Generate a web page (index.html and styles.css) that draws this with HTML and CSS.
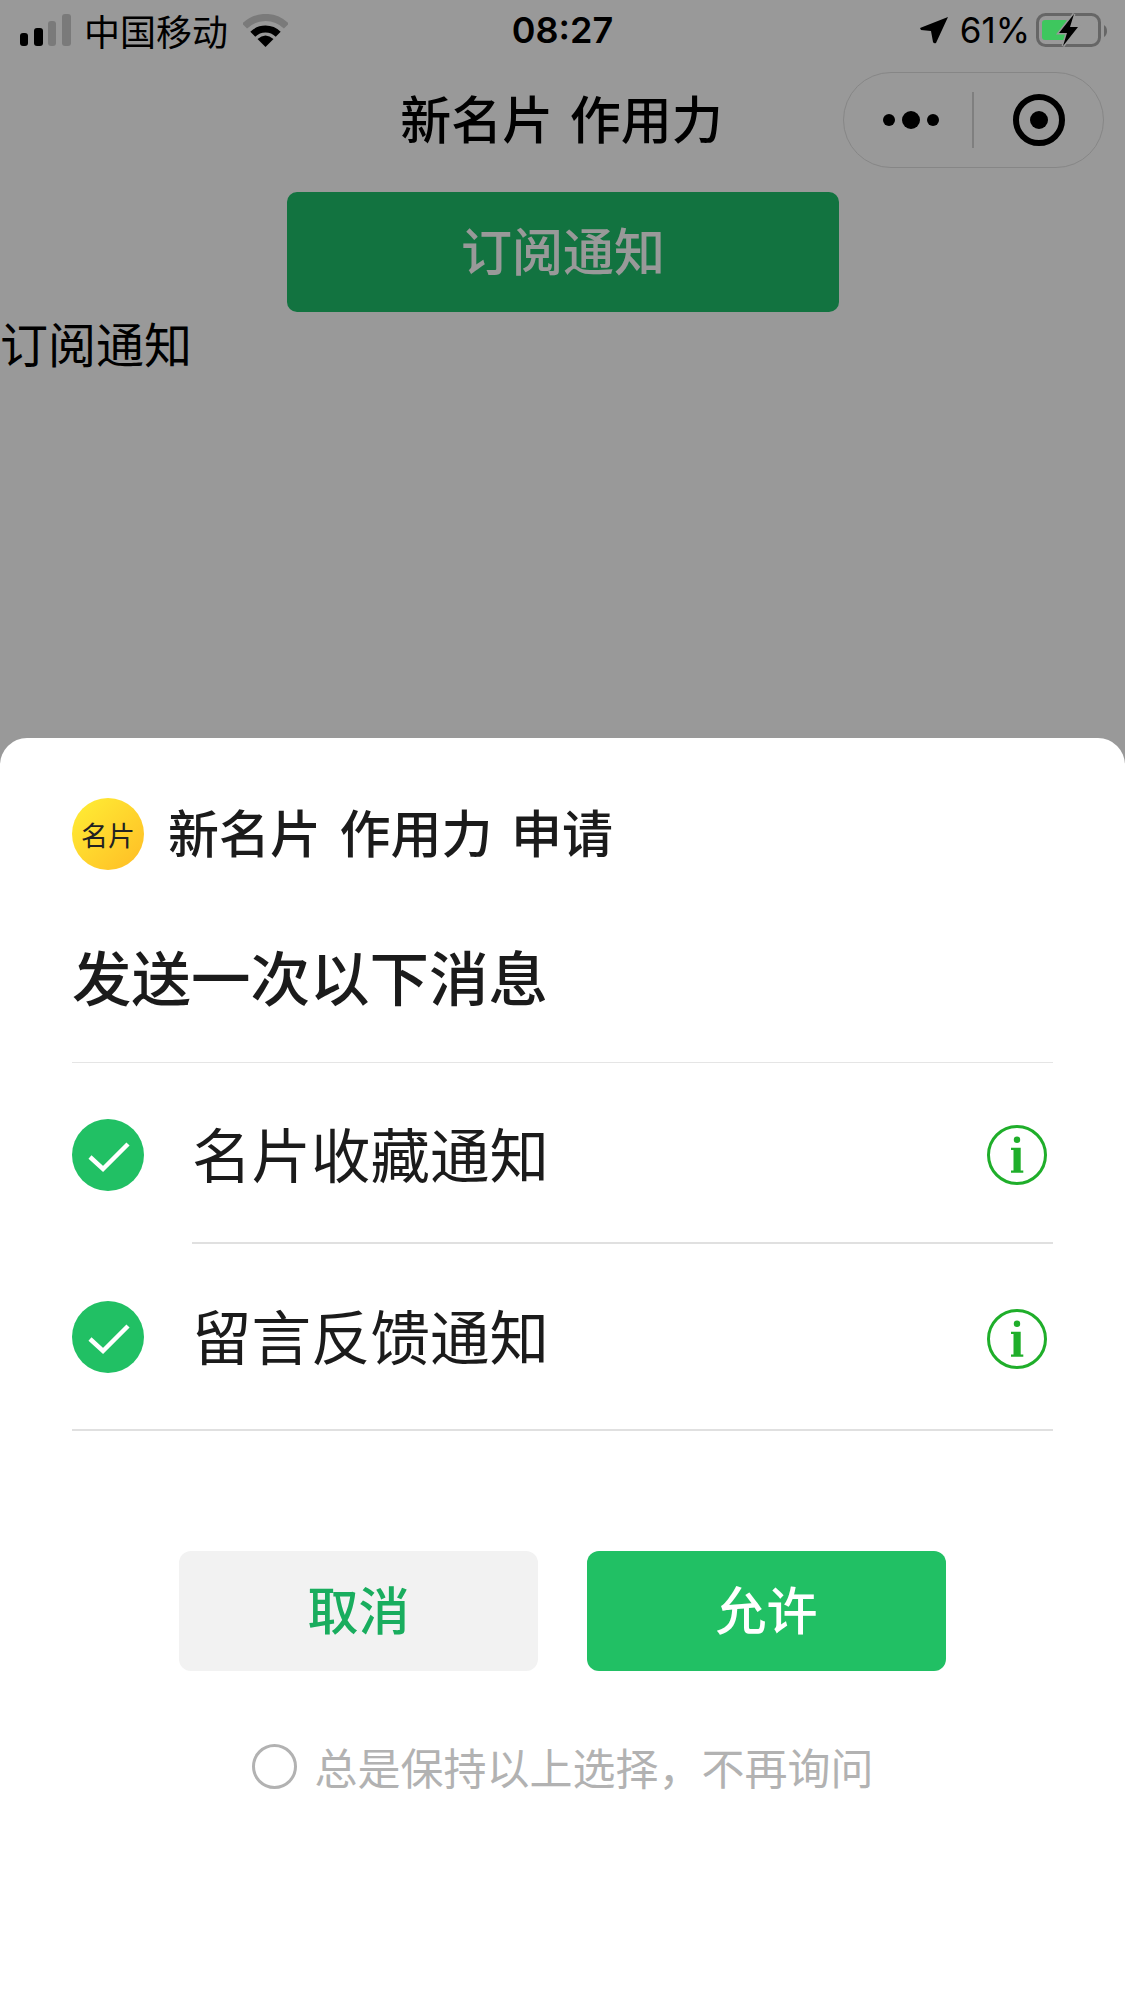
FILE: index.html
```html
<!DOCTYPE html>
<html lang="zh-CN">

<head>
	<meta charset="utf-8">
	<meta name="viewport" content="width=device-width, initial-scale=1">
	<title>新名片 作用力</title>
	<link rel="stylesheet" href="styles.css">
</head>

<body>
	<div class="status-bar">
		<div class="status-left">
			<svg class="signal" viewBox="0 0 51 32">
				<rect x="0" y="19" width="8" height="13" rx="3" fill="#000"></rect>
				<rect x="14" y="14" width="9" height="18" rx="3" fill="#000"></rect>
				<rect x="28" y="7" width="8" height="25" rx="3" fill="#7a7a7a"></rect>
				<rect x="42" y="0" width="9" height="32" rx="3" fill="#7a7a7a"></rect>
			</svg>
			<span class="carrier">中国移动</span>
			<svg class="wifi" viewBox="0 0 45 33">
				<path d="M1.6,12.1A29.5 29.5 0 0 1 43.4,12.1" fill="none" stroke="#7a7a7a" stroke-width="7"></path>
				<path d="M9.8,20.3A18 18 0 0 1 35.2,20.3" fill="none" stroke="#000" stroke-width="7"></path>
				<path d="M22.5,33L14.5,25Q22.5,18 30.5,25z" fill="#000"></path>
			</svg>
		</div>
		<span class="clock">08:27</span>
		<div class="status-right">
			<svg class="arrow" viewBox="0 0 28 27">
				<path d="M0,11L28,0L16,26Q14,27 13,25L11,14L1,13z" fill="#000"></path>
			</svg>
			<span class="percent">61%</span>
			<svg class="battery" viewBox="0 0 72 34">
				<rect x="1.5" y="1.5" width="62" height="31" rx="8" fill="none" stroke="#666" stroke-width="3"></rect>
				<rect x="6" y="7" width="26" height="20" rx="3" fill="#3ec75e"></rect>
				<path d="M68,12Q71,14 71,18Q71,22 68,24z" fill="#666"></path>
				<path d="M38,1L23,20H31L27,33L42,14H34z" fill="#000" stroke="#999" stroke-width="3" paint-order="stroke"></path>
			</svg>
		</div>
	</div>

	<div class="nav-bar">
		<span></span>
		<h1 class="nav-title">新名片 作用力</h1>
		<div class="capsule">
			<svg class="capsule-more" viewBox="0 0 56 18">
				<circle cx="6" cy="9" r="6"></circle>
				<circle cx="28" cy="9" r="9"></circle>
				<circle cx="50" cy="9" r="6"></circle>
			</svg>
			<i class="capsule-line"></i>
			<svg class="capsule-close" viewBox="0 0 52 52">
				<circle cx="26" cy="26" r="23" fill="none" stroke="#000" stroke-width="6"></circle>
				<circle cx="26" cy="26" r="9" fill="#000"></circle>
			</svg>
		</div>
	</div>

	<button class="subscribe-btn">订阅通知</button>
	<div class="plain-text">订阅通知</div>

	<div class="mask"></div>

	<div class="sheet">
		<div class="sheet-head">
			<div class="avatar">名片</div>
			<span class="app-name">新名片 作用力 申请</span>
		</div>
		<h2 class="sheet-title">发送一次以下消息</h2>

		<div class="notice-list">
			<div class="notice-row">
				<svg class="check" viewBox="0 0 72 72">
					<circle cx="36" cy="36" r="36" fill="#21c064"></circle>
					<path d="M18,38L31,50L56,25" fill="none" stroke="#fff" stroke-width="4.5"></path>
				</svg>
				<div class="notice-body">
					<span class="notice-name">名片收藏通知</span>
					<svg class="info" viewBox="0 0 60 60">
						<circle cx="30" cy="30" r="28.5" fill="none" stroke="#1fae2a" stroke-width="3"></circle>
						<circle cx="30" cy="14.7" r="3.2" fill="#1fae2a"></circle>
						<path d="M24,22.7H33.7V45.5H36.3V47.7H24V45.5H26.5V25H24z" fill="#1fae2a"></path>
					</svg>
				</div>
			</div>
			<div class="notice-row">
				<svg class="check" viewBox="0 0 72 72">
					<circle cx="36" cy="36" r="36" fill="#21c064"></circle>
					<path d="M18,38L31,50L56,25" fill="none" stroke="#fff" stroke-width="4.5"></path>
				</svg>
				<div class="notice-body">
					<span class="notice-name">留言反馈通知</span>
					<svg class="info" viewBox="0 0 60 60">
						<circle cx="30" cy="30" r="28.5" fill="none" stroke="#1fae2a" stroke-width="3"></circle>
						<circle cx="30" cy="14.7" r="3.2" fill="#1fae2a"></circle>
						<path d="M24,22.7H33.7V45.5H36.3V47.7H24V45.5H26.5V25H24z" fill="#1fae2a"></path>
					</svg>
				</div>
			</div>
		</div>

		<div class="actions">
			<button class="btn btn-cancel">取消</button>
			<button class="btn btn-allow">允许</button>
		</div>

		<div class="always">
			<i class="radio"></i>
			<span>总是保持以上选择，不再询问</span>
		</div>
	</div>
</body>

</html>
```

FILE: styles.css
```css
* {
	box-sizing: border-box;
}

body {
	background-color: #fff;
	color: #000;
	font-family: "Noto Sans CJK SC", "Noto Sans", sans-serif;
	height: 2001px;
	margin: 0;
	overflow: hidden;
	position: relative;
}

h1,
h2 {
	font-weight: 500;
	margin: 0;
}

button {
	border: 0;
	font-family: inherit;
	padding: 0;
}

/* status bar sits above the mask */
.status-bar {
	align-items: center;
	display: grid;
	grid-template-columns: 1fr auto 1fr;
	height: 60px;
	position: relative;
	z-index: 1;
}

.status-left {
	align-items: center;
	display: flex;
	padding-left: 20px;
}

.signal {
	height: 32px;
	width: 51px;
}

.carrier {
	font-size: 36px;
	line-height: 60px;
	margin-left: 13px;
}

.wifi {
	height: 33px;
	margin-left: 15px;
	width: 45px;
}

.clock {
	font-family: Inter, sans-serif;
	font-size: 36px;
	font-weight: 600;
}

.status-right {
	align-items: center;
	display: flex;
	justify-content: flex-end;
	padding-right: 17px;
}

.arrow {
	height: 27px;
	width: 28px;
}

.percent {
	font-family: Inter, sans-serif;
	font-size: 35px;
	margin-left: 12px;
}

.battery {
	height: 34px;
	margin-left: 6px;
	width: 72px;
}

/* nav */
.nav-bar {
	align-items: center;
	display: grid;
	grid-template-columns: 1fr auto 1fr;
	height: 120px;
}

.nav-title {
	font-size: 51px;
	line-height: 72px;
	padding: 0 2px 6px 0;
	word-spacing: 5px;
}

.capsule {
	align-items: center;
	border: 1.5px solid #e0e0e0;
	border-radius: 48px;
	display: flex;
	height: 96px;
	justify-self: end;
	margin-right: 21px;
	width: 261px;
}

.capsule-more {
	height: 18px;
	margin-left: 39px;
	width: 56px;
}

.capsule-line {
	background-color: #d4d4d4;
	height: 56px;
	margin-left: 33px;
	width: 1.5px;
}

.capsule-close {
	height: 52px;
	margin-left: 39px;
	width: 52px;
}

/* page content under the mask */
.subscribe-btn {
	background-color: #1ec06b;
	border-radius: 10px;
	color: #fff;
	display: block;
	font-size: 51px;
	font-weight: 500;
	height: 120px;
	margin: 12px auto 0 287px;
	padding-bottom: 6px;
	width: 552px;
}

.plain-text {
	font-size: 48px;
	line-height: 60px;
}

.mask {
	background-color: rgba(0, 0, 0, 0.4);
	inset: 0;
	position: absolute;
}

/* dialog */
.sheet {
	background-color: #fff;
	border-radius: 27px 27px 0 0;
	bottom: 0;
	color: #1b1b1b;
	left: 0;
	padding: 60px 72px 0;
	position: absolute;
	right: 0;
	top: 738px;
	z-index: 2;
}

.sheet-head {
	align-items: center;
	display: flex;
	gap: 24px;
	height: 72px;
}

.avatar {
	align-items: center;
	background: linear-gradient(135deg, #ffef35, #ffbc25);
	border-radius: 50%;
	color: #222;
	display: flex;
	flex: none;
	font-size: 27px;
	height: 72px;
	justify-content: center;
	width: 72px;
}

.app-name {
	font-size: 51px;
	font-weight: 500;
	line-height: 72px;
	padding-bottom: 6px;
	word-spacing: 7px;
}

.sheet-title {
	border-bottom: 1.5px solid #e5e5e5;
	font-size: 59.5px;
	line-height: 84px;
	padding: 63px 0 45px;
}

.notice-row {
	align-items: stretch;
	display: flex;
	gap: 48px;
}

.check {
	flex: none;
	height: 72px;
	margin-top: 56px;
	width: 72px;
}

.notice-body {
	align-items: center;
	border-bottom: 2px solid #e0e0e0;
	display: flex;
	flex: 1;
	height: 181px;
	justify-content: space-between;
	padding-right: 6px;
}

.notice-row:last-child {
	border-bottom: 2px solid #e0e0e0;
}

.notice-row:last-child .check {
	margin-top: 57px;
}

.notice-row:last-child .notice-body {
	border-bottom: 0;
	height: 185px;
}

.notice-name {
	font-size: 59.5px;
	line-height: 72px;
	margin-bottom: 2px;
}

.notice-row:last-child .notice-name {
	margin-bottom: 5px;
}

.info {
	height: 60px;
	margin-top: 4px;
	width: 60px;
}

.actions {
	display: flex;
	gap: 49px;
	justify-content: center;
	margin-top: 120px;
}

.btn {
	border-radius: 12px;
	font-size: 51px;
	font-weight: 500;
	height: 120px;
	padding-bottom: 6px;
	width: 359px;
}

.btn-cancel {
	background-color: #f2f2f2;
	color: #19ad5e;
}

.btn-allow {
	background-color: #21c064;
	color: #fff;
}

.always {
	align-items: center;
	color: #b2b2b2;
	display: flex;
	font-size: 43px;
	gap: 18px;
	justify-content: center;
	line-height: 60px;
	margin-top: 65px;
}

.radio {
	border: 3px solid #b2b2b2;
	border-radius: 50%;
	flex: none;
	height: 45px;
	width: 45px;
}
```
